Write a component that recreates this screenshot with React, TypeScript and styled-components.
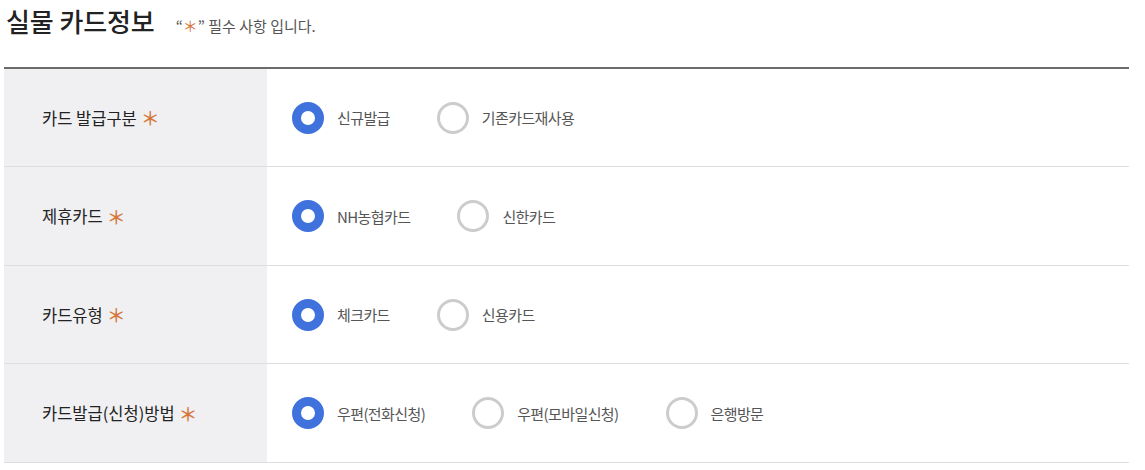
import React from "react";
import styled, { createGlobalStyle } from "styled-components";

const Global = createGlobalStyle`
  html, body { margin: 0; padding: 0; background: #fff; }
  body { font-family: "Noto Sans CJK KR", "Noto Sans", sans-serif; }
  * { box-sizing: border-box; }
`;

const Page = styled.div`
  width: 1145px;
  padding: 0 16px 0 4px;
`;

const Header = styled.div`
  display: flex;
  align-items: baseline;
  height: 67px;
  padding-top: 3px;
  padding-left: 2px;
`;

const Title = styled.h2`
  margin: 0;
  font-size: 26px;
  font-weight: 500;
  color: #222;
  letter-spacing: -0.1px;
  line-height: 36px;
`;

const Note = styled.span`
  margin-left: 21px;
  font-size: 15px;
  color: #555;
  letter-spacing: 0px;
`;

const Star = styled.span`
  color: #d5773a;
  font-weight: 400;
`;

const Table = styled.div`
  border-top: 2px solid #6b6b6b;
`;

const Row = styled.div`
  display: grid;
  grid-template-columns: 263px 1fr;
  height: 98px;
  border-bottom: 1px solid #dedede;
  &:nth-child(even) {
    height: 99px;
  }
`;

const Label = styled.div`
  display: flex;
  align-items: center;
  padding-left: 38px;
  background: #f0f0f2;
  font-size: 16.5px;
  color: #222;
  letter-spacing: 0px;
  gap: 4px;
`;

const LabelStar = styled(Star)`
  font-size: 19px;
  line-height: 1;
  font-weight: 500;
`;

const Options = styled.div`
  display: flex;
  align-items: center;
  gap: 47px;
  padding-left: 25px;
`;

const Option = styled.label`
  display: flex;
  align-items: center;
  gap: 13px;
  font-size: 15px;
  color: #555;
  letter-spacing: -0.6px;
  cursor: pointer;
`;

const Circle = styled.span<{ $on: boolean }>`
  width: 32px;
  height: 32px;
  border-radius: 50%;
  flex: none;
  background: #fff;
  border: ${(p) => (p.$on ? "9px solid #3f72dc" : "3px solid #cccccc")};
`;

const rows: { label: string; options: string[] }[] = [
  { label: "카드 발급구분", options: ["신규발급", "기존카드재사용"] },
  { label: "제휴카드", options: ["NH농협카드", "신한카드"] },
  { label: "카드유형", options: ["체크카드", "신용카드"] },
  { label: "카드발급(신청)방법", options: ["우편(전화신청)", "우편(모바일신청)", "은행방문"] },
];

export default function App() {
  return (
    <Page>
      <Global />
      <Header>
        <Title>실물 카드정보</Title>
        <Note>
          “<Star>＊</Star>” 필수 사항 입니다.
        </Note>
      </Header>
      <Table>
        {rows.map((r) => (
          <Row key={r.label}>
            <Label>
              {r.label}
              <LabelStar>＊</LabelStar>
            </Label>
            <Options>
              {r.options.map((o, i) => (
                <Option key={o}>
                  <Circle $on={i === 0} />
                  {o}
                </Option>
              ))}
            </Options>
          </Row>
        ))}
      </Table>
    </Page>
  );
}
